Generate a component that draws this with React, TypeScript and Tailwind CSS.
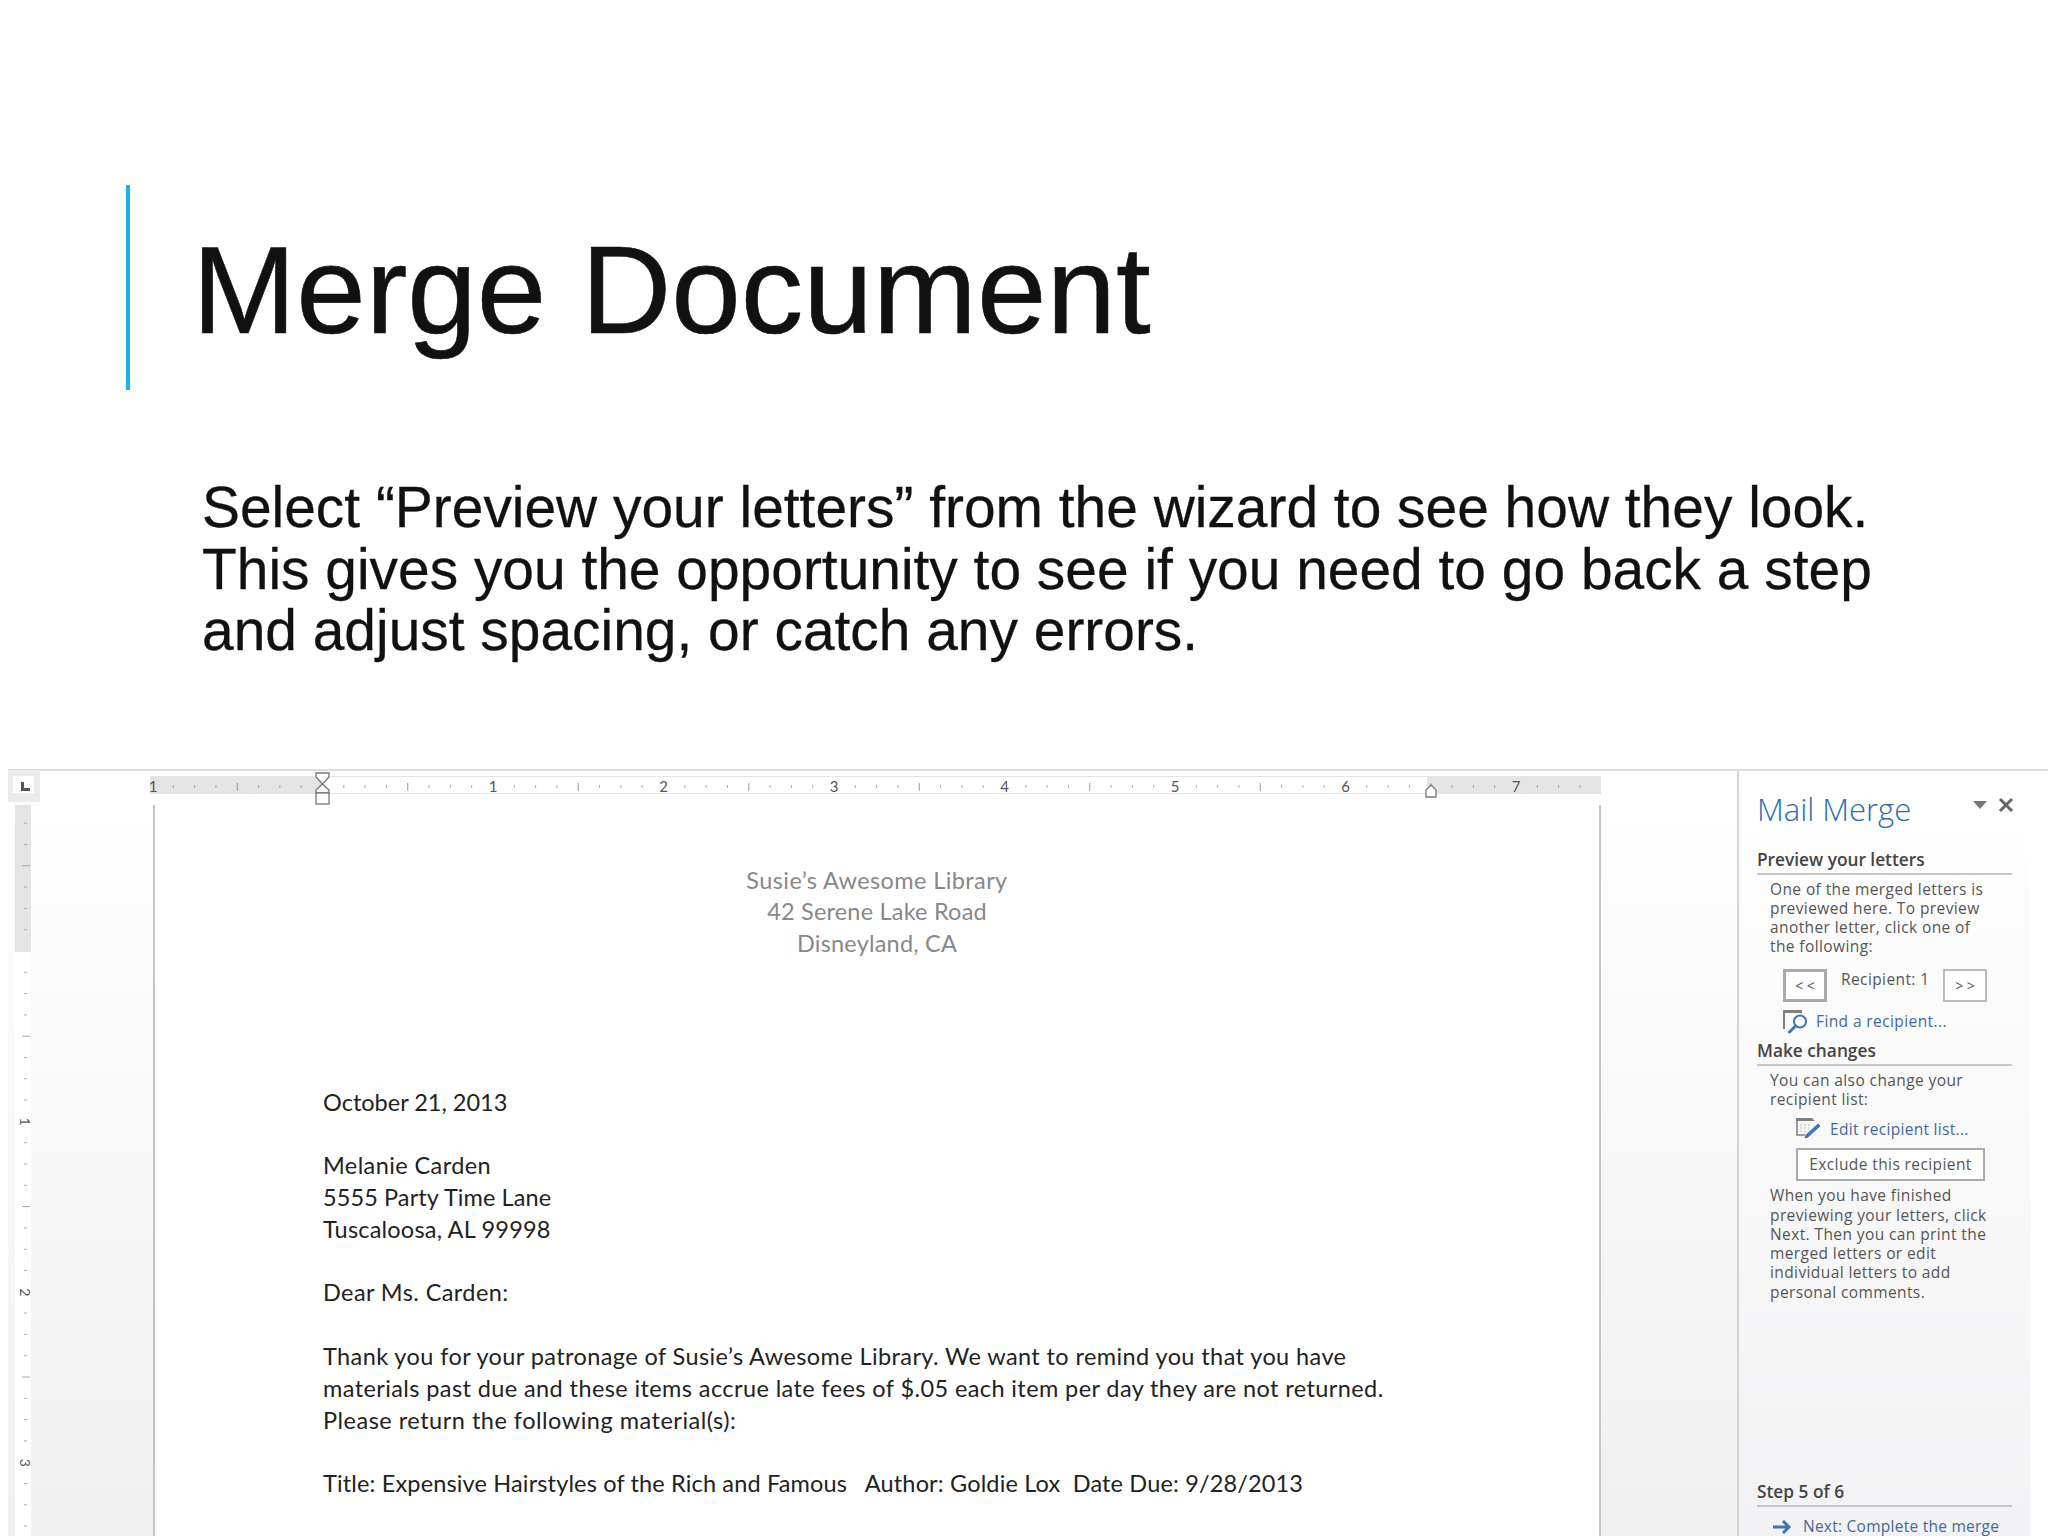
import React from 'react';

const eighth = 170.5 / 8;
const zeroX = 172.5;

function HorizontalRuler() {
  const ticks = [];
  for (let i = -7; i <= 59; i++) {
    if (i % 8 === 0) continue;
    const x = zeroX + i * eighth;
    const half = ((i % 8) + 8) % 8 === 4;
    ticks.push(<line key={i} x1={x} x2={x} y1={half ? 12 : 14} y2={half ? 20 : 17} stroke={half ? '#999' : '#aaa'} strokeWidth="1" />);
  }
  const labels = [[-1, '1'], [1, '1'], [2, '2'], [3, '3'], [4, '4'], [5, '5'], [6, '6'], [7, '7']] as const;
  return (
    <svg width="1451" height="34" className="block">
      <rect x="0" y="5" width="1451" height="18" fill="#e4e4e4" />
      <rect x="172" y="6" width="1105" height="16" fill="#ffffff" />
      {ticks}
      {labels.map(([n, t]) => (
        <text key={n} x={n === -1 ? 3 : zeroX + n * 170.5} y="21" textAnchor="middle" fontSize="15" fill="#555" fontFamily="Lato, sans-serif">{t}</text>
      ))}
      <path d="M166 2h13v4l-6.500 7-6.500-7z" fill="#fff" stroke="#777" strokeWidth="1.300" />
      <path d="M166 22v-3l6.500-6 6.500 6v3z" fill="#fff" stroke="#777" strokeWidth="1.300" />
      <rect x="166" y="22" width="13" height="11" fill="#fff" stroke="#777" strokeWidth="1.300" />
      <path d="M1276 26v-7l5-5 5 5v7z" fill="#fff" stroke="#777" strokeWidth="1.300" />
    </svg>
  );
}

function VerticalRuler() {
  const zeroY = 146;
  const ticks = [];
  for (let i = -6; i <= 27; i++) {
    if (i % 8 === 0) continue;
    const y = zeroY + i * 21.3;
    const half = ((i % 8) + 8) % 8 === 4;
    ticks.push(<line key={i} x1={half ? 7 : 9} x2={half ? 15 : 12} y1={y} y2={y} stroke="#aaa" strokeWidth="1" />);
  }
  return (
    <svg width="16" height="731" className="block overflow-visible">
      <rect x="0" y="0" width="16" height="147" fill="#e4e4e4" />
      <rect x="0" y="147" width="16" height="584" fill="#ffffff" />
      {ticks}
      {['1', '2', '3'].map((t, n) => (
        <text key={t} transform={`translate(4.500 ${zeroY + (n + 1) * 170.6}) rotate(90)`} fontSize="14" textAnchor="middle" fill="#555" fontFamily="Lato, sans-serif">{t}</text>
      ))}
    </svg>
  );
}

function TabIcon() {
  return (
    <svg width="9" height="9" viewBox="0 0 9 9" className="mt-[6px] ml-[8px]">
      <path d="M0 0h3v6h6v3H0z" fill="#555" />
    </svg>
  );
}

function SearchIcon() {
  return (
    <svg width="26" height="24" viewBox="0 0 26 24" className="shrink-0">
      <path d="M0 0h19v3H2v16H0z" fill="#7f7f7f" />
      <circle cx="17" cy="11.500" r="6" fill="#fff" stroke="#3d78b5" strokeWidth="2" />
      <path d="M12.500 16l-6 6" stroke="#3d78b5" strokeWidth="3" strokeLinecap="round" />
    </svg>
  );
}

function EditIcon() {
  return (
    <svg width="26" height="24" viewBox="0 0 26 24" className="shrink-0">
      <path d="M0 1h16l3 3H0z" fill="#7f7f7f" />
      <path d="M1 4v14h8" fill="none" stroke="#7f7f7f" strokeWidth="1.500" />
      <path d="M4 8h12M4 11h9M4 14h7" stroke="#b8b8b8" strokeDasharray="2 2" />
      <path d="M22 7l2 2-12 11-3 1 1-3z" fill="#3d78b5" stroke="#3d78b5" strokeWidth="1" />
    </svg>
  );
}

function Heading({ children, className = '' }: { children: React.ReactNode; className?: string }) {
  return (
    <div className={`ml-[18px] w-[255px] pb-[2px] border-b-2 border-[#c6c6c6] text-[17.300px] leading-[22px] font-semibold text-[#444] ${className}`}>
      {children}
    </div>
  );
}

function PaneText({ children, className = '' }: { children: React.ReactNode; className?: string }) {
  return <p className={`ml-[31px] w-[235px] text-[15.500px] leading-[19.300px] tracking-[0.4px] text-[#555] whitespace-pre-line ${className}`}>{children}</p>;
}

function MailMergePane() {
  return (
    <div className="w-[311px] h-full border-l-2 border-[#d4d4d4] bg-white font-['Open_Sans',sans-serif] overflow-hidden">
      <div className="w-[291px] h-full bg-gradient-to-b from-white to-[#f2f2f4] flex flex-col">
        <div className="flex items-start h-[78px] pt-[18px] shrink-0">
          <div className="ml-[18px] w-[216px] text-[31px] leading-[40px] font-light text-[#2b6cb0]">Mail Merge</div>
          <svg width="14" height="8" viewBox="0 0 14 8" className="mt-[12px]"><path d="M0 0h14l-7 8z" fill="#777" /></svg>
          <svg width="16" height="16" viewBox="0 0 16 16" className="ml-[11px] mt-[8px]"><path d="M2 2l12 12M14 2L2 14" stroke="#666" strokeWidth="3" /></svg>
        </div>
        <Heading>Preview your letters</Heading>
        <PaneText className="mt-[5px]">{'One of the merged letters is\npreviewed here. To preview\nanother letter, click one of\nthe following:'}</PaneText>
        <div className="ml-[44px] mt-[12px] flex items-start">
          <div className="w-[44px] h-[33px] border-[3px] border-[#aaa] bg-white flex items-center justify-center text-[14px] text-[#555]">&lt; &lt;</div>
          <div className="ml-[14px] mt-[-1px] w-[102px] text-[15.500px] leading-[22px] tracking-[0.4px] text-[#555]">Recipient: 1</div>
          <div className="w-[44px] h-[33px] border-2 border-[#bbb] bg-white flex items-center justify-center text-[14px] text-[#555]">&gt; &gt;</div>
        </div>
        <div className="ml-[44px] mt-[8px] flex items-center gap-[7px] h-[24px]">
          <SearchIcon />
          <span className="text-[15.500px] text-[#44699b] tracking-[0.4px]">Find a recipient...</span>
        </div>
        <Heading className="mt-[6px]">Make changes</Heading>
        <PaneText className="mt-[5px]">{'You can also change your\nrecipient list:'}</PaneText>
        <div className="ml-[57px] mt-[8px] flex items-center gap-[8px] h-[24px]">
          <EditIcon />
          <span className="text-[15.500px] text-[#44699b] tracking-[0.3px]">Edit recipient list...</span>
        </div>
        <div className="ml-[57px] mt-[7px] w-[189px] h-[33px] border-2 border-[#aaa] bg-white flex items-center justify-center text-[15.500px] tracking-[0.4px] text-[#555]">Exclude this recipient</div>
        <PaneText className="mt-[5px]">{'When you have finished\npreviewing your letters, click\nNext. Then you can print the\nmerged letters or edit\nindividual letters to add\npersonal comments.'}</PaneText>
        <div className="flex-1" />
        <Heading>Step 5 of 6</Heading>
        <div className="ml-[34px] mt-[9px] flex items-center gap-[11px] h-[22px] mb-[-2px]">
          <svg width="19" height="14" viewBox="0 0 19 14"><path d="M0 7h16M10 1l6 6-6 6" fill="none" stroke="#3d78b5" strokeWidth="3" /></svg>
          <span className="text-[15.500px] text-[#44699b] tracking-[0.25px]">Next: Complete the merge</span>
        </div>
      </div>
    </div>
  );
}

function Letter() {
  return (
    <div className="border-x-2 border-[#c4c4c4] w-[1448px] h-full bg-white pt-[60px] font-['Lato',sans-serif] text-[23.500px] leading-[31.700px] tracking-[0.4px] text-[#222] overflow-hidden">
      <div className="text-center text-[#888]">
        <p>Susie’s Awesome Library</p>
        <p className="tracking-[0.2px]">42 Serene Lake Road</p>
        <p className="tracking-[0.2px]">Disneyland, CA</p>
      </div>
      <div className="pl-[168px] mt-[127px]">
        <p className="tracking-[0px]">October 21, 2013</p>
        <p className="mt-[32px]">Melanie Carden</p>
        <p className="tracking-[0.1px]">5555 Party Time Lane</p>
        <p className="tracking-[0.2px]">Tuscaloosa, AL 99998</p>
        <p className="mt-[32px]">Dear Ms. Carden:</p>
        <p className="mt-[32px]">Thank you for your patronage of Susie’s Awesome Library. We want to remind you that you have</p>
        <p>materials past due and these items accrue late fees of $.05 each item per day they are not returned.</p>
        <p className="tracking-[0.5px]">Please return the following material(s):</p>
        <p className="mt-[32px] whitespace-pre tracking-[0.15px]">Title: Expensive Hairstyles of the Rich and Famous   Author: Goldie Lox  Date Due: 9/28/2013</p>
      </div>
    </div>
  );
}

export default function App() {
  return (
    <div className="w-[2048px] h-[1536px] bg-white overflow-hidden font-['Liberation_Sans',sans-serif] flex flex-col">
      <div className="flex h-[205px] mt-[185px] ml-[126px] shrink-0">
        <div className="w-[4px] bg-[#1fb0ea]" />
        <h1 className="ml-[62px] mt-[33px] text-[125px] leading-[144px] text-[#111] [-webkit-text-stroke:0.6px_#111]">Merge Document</h1>
      </div>
      <p className="ml-[202px] mt-[87px] text-[56.900px] leading-[61.500px] text-[#111] whitespace-pre-line [-webkit-text-stroke:0.3px_#111] shrink-0">
        {'Select “Preview your letters” from the wizard to see how they look.\nThis gives you the opportunity to see if you need to go back a step\nand adjust spacing, or catch any errors.'}
      </p>
      <div className="mt-[107px] ml-[8px] flex flex-1 min-h-0 border-t-2 border-[#dcdcdc] bg-gradient-to-b from-white to-[#f0f0f0]">
        <div className="w-[1729px] flex flex-col">
          <div className="flex items-start h-[34px] shrink-0">
            <div className="w-[32px] h-[32px] mt-[-1px] pt-[6px] pl-[5px] bg-[#ececec]">
              <div className="w-[21px] h-[17px] bg-white overflow-hidden"><TabIcon /></div>
            </div>
            <div className="ml-[110px]"><HorizontalRuler /></div>
          </div>
          <div className="flex flex-1 min-h-0 overflow-hidden">
            <div className="ml-[7px] w-[16px] shrink-0"><VerticalRuler /></div>
            <div className="w-[122px] shrink-0" />
            <div className="w-[1448px] shrink-0 h-full"><Letter /></div>
          </div>
        </div>
        <MailMergePane />
      </div>
    </div>
  );
}
